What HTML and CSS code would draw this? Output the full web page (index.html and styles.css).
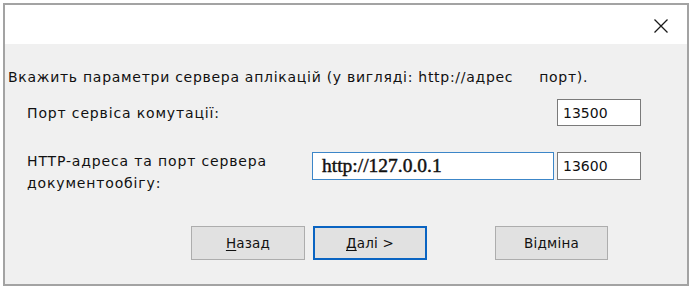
FILE: index.html
```html
<!DOCTYPE html>
<html lang="uk">
<head>
<meta charset="utf-8">
<link rel="stylesheet" href="styles.css">
</head>
<body>
<div class="window">
  <div class="titlebar">
    <span class="close">
      <svg width="16" height="16" viewBox="0 0 16 16"><path d="M1.5 1.5 L14.5 14.5 M14.5 1.5 L1.5 14.5" stroke="#1a1a1a" stroke-width="1.3" fill="none"/></svg>
    </span>
  </div>
  <div class="content">
    <p class="intro">Вкажить параметри сервера аплікацій (у вигляді: http://адрес&nbsp;&nbsp;&nbsp;&nbsp; порт).</p>
    <div class="row row-port">
      <span class="label">Порт сервіса комутації:</span>
      <span class="field port">13500</span>
    </div>
    <div class="row row-http">
      <span class="label">HTTP-адреса та порт сервера<br>документообігу:</span>
      <span class="field url">http://127.0.0.1</span>
      <span class="field port">13600</span>
    </div>
    <div class="buttons">
      <span class="btn back"><u>Н</u>азад</span>
      <span class="btn next default"><u>Д</u>алі &gt;</span>
      <span class="btn cancel">Відміна</span>
    </div>
  </div>
</div>
</body>
</html>
```

FILE: styles.css
```css
html, body {
  margin: 0;
  padding: 0;
  background: #ffffff;
}
body {
  width: 694px;
  height: 291px;
  overflow: hidden;
  font-family: "DejaVu Sans", Verdana, sans-serif;
  font-size: 14px;
  letter-spacing: 0.85px;
  color: #111;
}
.window {
  margin: 3px 0 0 3px;
  width: 682px;
  height: 279px;
  border: 2px solid #a3a3a3;
  background: #f0f0f0;
  display: flex;
  flex-direction: column;
}
.titlebar {
  height: 39px;
  background: #ffffff;
  display: flex;
  justify-content: flex-end;
  align-items: center;
}
.close {
  width: 16px;
  height: 16px;
  margin-right: 18px;
  margin-top: 2px;
  display: flex;
}
.content {
  flex: 1;
  padding: 0 0 0 3px;
  display: flex;
  flex-direction: column;
}
.intro {
  margin: 24px 0 0 0;
  line-height: 18px;
  white-space: nowrap;
  letter-spacing: 0.72px;
}
.row {
  display: flex;
  align-items: flex-start;
}
.row-port {
  margin-top: 13px;
  height: 27px;
  align-items: center;
}
.row-http {
  margin-top: 26px;
}
.label {
  padding-left: 19px;
  line-height: 22px;
  white-space: nowrap;
}
.row-port .label {
  flex: 1;
}
.row-http .label {
  width: 285px;
  margin-top: -2px;
}
.field {
  box-sizing: border-box;
  height: 27px;
  background: #fff;
  border: 1px solid #7a7a7a;
  display: flex;
  align-items: center;
  padding-left: 5px;
}
.port {
  width: 84px;
  letter-spacing: 0;
}
.row-port .port {
  margin-right: 46px;
}
.url {
  width: 242px;
  height: 28px;
  border-color: #3c86c8;
  font-family: "Liberation Serif", "Times New Roman", serif;
  font-size: 19.5px;
  letter-spacing: 0;
  -webkit-text-stroke: 0.45px #111;
  padding-left: 9px;
  margin-right: 3px;
}
.row-http .port {
  height: 28px;
}
.buttons {
  display: flex;
  margin-top: 32px;
  padding-left: 183px;
}
.btn {
  box-sizing: border-box;
  height: 34px;
  width: 114px;
  background: #e1e1e1;
  border: 1px solid #adadad;
  display: flex;
  align-items: center;
  justify-content: center;
  font-size: 13.5px;
  letter-spacing: 0.2px;
}
.btn u {
  text-decoration-thickness: 1px;
  text-underline-offset: 2px;
}
.next {
  margin-left: 8px;
  border: 2px solid #0a64c2;
}
.cancel {
  margin-left: 68px;
  width: 113px;
}
```
